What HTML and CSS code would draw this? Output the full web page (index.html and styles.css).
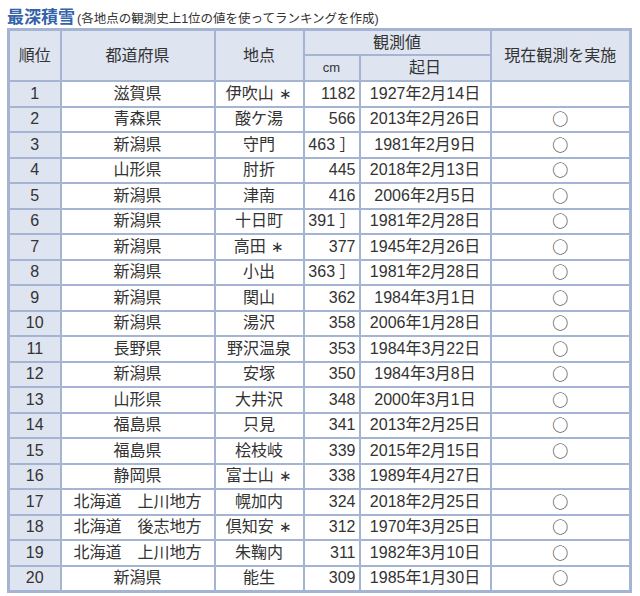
FILE: index.html
```html
<!DOCTYPE html>
<html lang="ja">
<head>
<meta charset="utf-8">
<link rel="stylesheet" href="styles.css">
</head>
<body>
<div class="page">
  <h1 class="title"><span class="title-main">最深積雪</span><span class="title-sub">(各地点の観測史上1位の値を使ってランキングを作成)</span></h1>
  <table class="rank">
    <colgroup>
      <col class="c-rank"><col class="c-pref"><col class="c-loc"><col class="c-cm"><col class="c-date"><col class="c-now">
    </colgroup>
    <thead>
      <tr class="h1">
        <th rowspan="2">順位</th>
        <th rowspan="2">都道府県</th>
        <th rowspan="2">地点</th>
        <th colspan="2">観測値</th>
        <th rowspan="2">現在観測を実施</th>
      </tr>
      <tr class="h2">
        <th class="unit">cm</th>
        <th>起日</th>
      </tr>
    </thead>
    <tbody>
      <tr><td class="no">1</td><td>滋賀県</td><td>伊吹山 <span class="ast">∗</span></td><td class="val">1182</td><td>1927年2月14日</td><td></td></tr>
      <tr><td class="no">2</td><td>青森県</td><td>酸ケ湯</td><td class="val">566</td><td>2013年2月26日</td><td class="mark">○</td></tr>
      <tr><td class="no">3</td><td>新潟県</td><td>守門</td><td class="val">463 ］</td><td>1981年2月9日</td><td class="mark">○</td></tr>
      <tr><td class="no">4</td><td>山形県</td><td>肘折</td><td class="val">445</td><td>2018年2月13日</td><td class="mark">○</td></tr>
      <tr><td class="no">5</td><td>新潟県</td><td>津南</td><td class="val">416</td><td>2006年2月5日</td><td class="mark">○</td></tr>
      <tr><td class="no">6</td><td>新潟県</td><td>十日町</td><td class="val">391 ］</td><td>1981年2月28日</td><td class="mark">○</td></tr>
      <tr><td class="no">7</td><td>新潟県</td><td>高田 <span class="ast">∗</span></td><td class="val">377</td><td>1945年2月26日</td><td class="mark">○</td></tr>
      <tr><td class="no">8</td><td>新潟県</td><td>小出</td><td class="val">363 ］</td><td>1981年2月28日</td><td class="mark">○</td></tr>
      <tr><td class="no">9</td><td>新潟県</td><td>関山</td><td class="val">362</td><td>1984年3月1日</td><td class="mark">○</td></tr>
      <tr><td class="no">10</td><td>新潟県</td><td>湯沢</td><td class="val">358</td><td>2006年1月28日</td><td class="mark">○</td></tr>
      <tr><td class="no">11</td><td>長野県</td><td>野沢温泉</td><td class="val">353</td><td>1984年3月22日</td><td class="mark">○</td></tr>
      <tr><td class="no">12</td><td>新潟県</td><td>安塚</td><td class="val">350</td><td>1984年3月8日</td><td class="mark">○</td></tr>
      <tr><td class="no">13</td><td>山形県</td><td>大井沢</td><td class="val">348</td><td>2000年3月1日</td><td class="mark">○</td></tr>
      <tr><td class="no">14</td><td>福島県</td><td>只見</td><td class="val">341</td><td>2013年2月25日</td><td class="mark">○</td></tr>
      <tr><td class="no">15</td><td>福島県</td><td>桧枝岐</td><td class="val">339</td><td>2015年2月15日</td><td class="mark">○</td></tr>
      <tr><td class="no">16</td><td>静岡県</td><td>富士山 <span class="ast">∗</span></td><td class="val">338</td><td>1989年4月27日</td><td></td></tr>
      <tr><td class="no">17</td><td>北海道　上川地方</td><td>幌加内</td><td class="val">324</td><td>2018年2月25日</td><td class="mark">○</td></tr>
      <tr><td class="no">18</td><td>北海道　後志地方</td><td>倶知安 <span class="ast">∗</span></td><td class="val">312</td><td>1970年3月25日</td><td class="mark">○</td></tr>
      <tr><td class="no">19</td><td>北海道　上川地方</td><td>朱鞠内</td><td class="val">311</td><td>1982年3月10日</td><td class="mark">○</td></tr>
      <tr><td class="no">20</td><td>新潟県</td><td>能生</td><td class="val">309</td><td>1985年1月30日</td><td class="mark">○</td></tr>
    </tbody>
  </table>
</div>
</body>
</html>
```

FILE: styles.css
```css
html, body {
  margin: 0;
  padding: 0;
  background: #ffffff;
}
body {
  font-family: "Liberation Sans", "Noto Sans CJK JP", sans-serif;
  color: #333333;
}
.page {
  padding: 1px 0 0 7px;
  width: 623px;
}
.title {
  margin: 0 0 5px 0;
  font-weight: normal;
  line-height: 22px;
  height: 22px;
  white-space: nowrap;
}
.title-main {
  font-size: 17px;
  font-weight: bold;
  color: #3563a9;
}
.title-sub {
  font-size: 12.5px;
  color: #333333;
  margin-left: 2px;
}
.rank {
  border-collapse: collapse;
  table-layout: fixed;
  width: 622px;
  border: 3px solid #a6b4d3;
  font-size: 16px;
}
.c-rank { width: 52px; }
.c-pref { width: 154px; }
.c-loc { width: 89px; }
.c-cm { width: 56px; }
.c-date { width: 131px; }
.c-now { width: 140px; }
.rank th, .rank td {
  border: 2px solid #a6b4d3;
  padding: 0 3px;
  text-align: center;
  font-weight: normal;
  white-space: nowrap;
  color: #333333;
  line-height: 20px;
}
.rank th {
  background: #dfe4f1;
}
.rank .h1 th { height: 23px; }
.rank .h2 th { height: 24px; }
.rank th.unit { font-size: 13px; }
.rank tbody tr { height: 25.5px; }
.rank td.no {
  background: #dfe4f1;
}
.rank td.val {
  text-align: right;
  padding-right: 3px;
}
.rank td.mark {
  font-family: "Noto Sans CJK JP", sans-serif;
  padding-bottom: 2px;
}
.ast {
  display: inline-block;
  width: 14px;
  text-align: center;
  font-family: "DejaVu Sans", sans-serif;
  font-size: 15px;
}
```
